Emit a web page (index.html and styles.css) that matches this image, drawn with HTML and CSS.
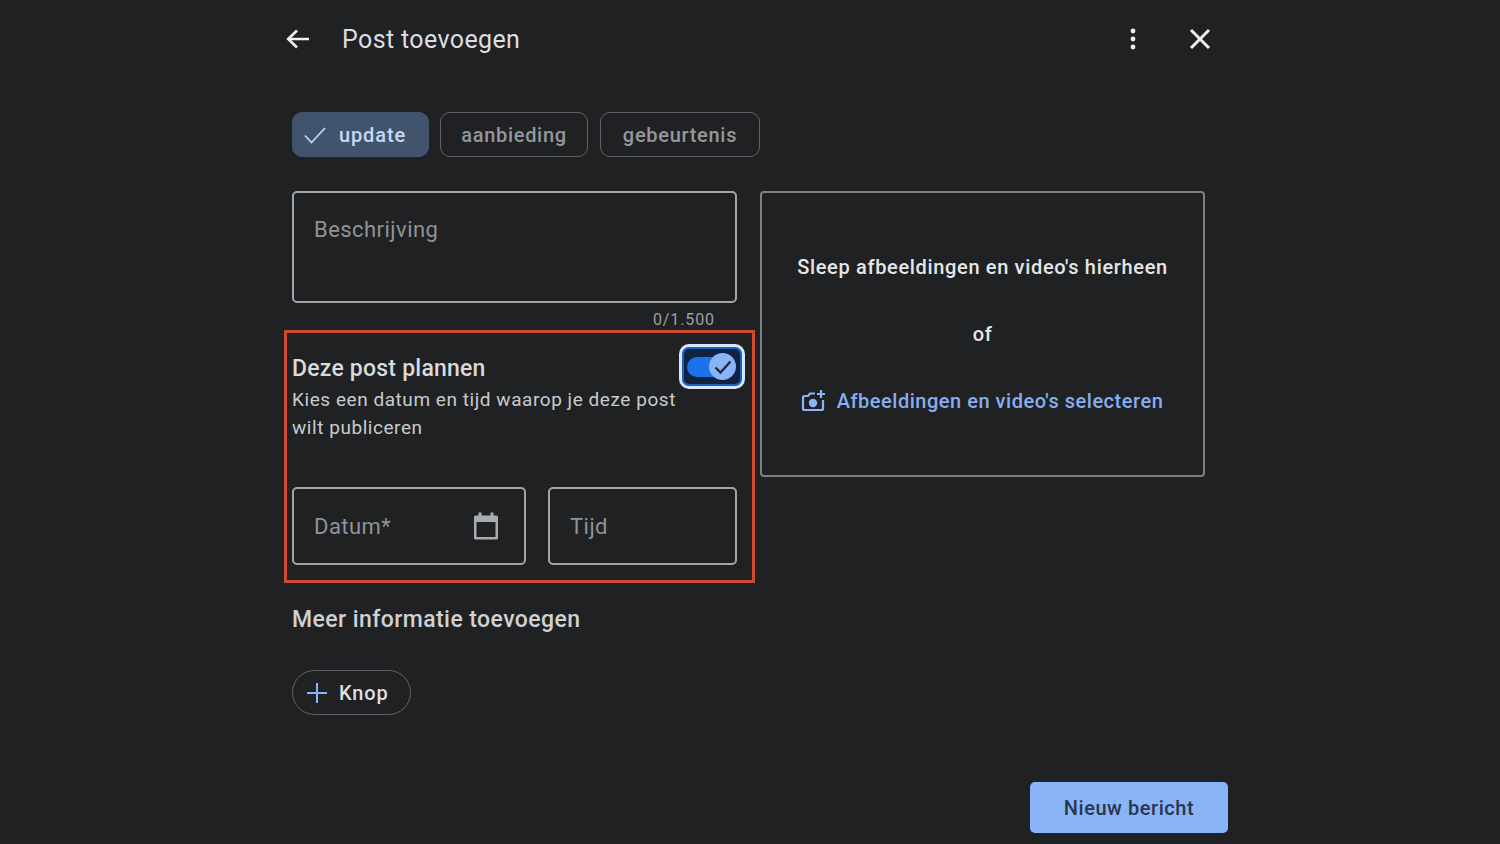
FILE: index.html
```html
<!DOCTYPE html>
<html lang="nl">
<head>
<meta charset="utf-8">
<title>Post toevoegen</title>
<link rel="stylesheet" href="styles.css">
</head>
<body>
<div class="dialog">
  <header class="topbar">
    <svg class="icon-back" width="26" height="24" viewBox="0 0 26 24"><path d="M24 12H3M12 3.500L3.200 12l8.800 8.500" fill="none" stroke="#f0f0f0" stroke-width="2.600"/></svg>
    <h1 class="title">Post toevoegen</h1>
    <div class="top-actions">
      <svg class="icon-more" width="6" height="24" viewBox="0 0 6 24"><circle cx="3" cy="4" r="2.400"/><circle cx="3" cy="12" r="2.400"/><circle cx="3" cy="20" r="2.400"/></svg>
      <svg class="icon-close" width="22" height="22" viewBox="0 0 22 22"><path d="M2 2l18 18M20 2L2 20" stroke="#f0f0f0" stroke-width="3" fill="none"/></svg>
    </div>
  </header>

  <div class="chips">
    <div class="chip chip-on">
      <svg width="24" height="20" viewBox="0 0 24 20"><path d="M2 10.500l6.500 7L22 3" fill="none" stroke="#c4d7f0" stroke-width="1.800"/></svg>
      <span>update</span>
    </div>
    <div class="chip chip-a">aanbieding</div>
    <div class="chip chip-g">gebeurtenis</div>
  </div>

  <div class="columns">
    <div class="left">
      <div class="field description">Beschrijving</div>
      <div class="counter">0/1.500</div>
      <section class="schedule">
        <div class="schedule-head">
          <div class="schedule-text">
            <h2 class="schedule-title">Deze post plannen</h2>
            <p class="schedule-desc">Kies een datum en tijd waarop je deze post wilt publiceren</p>
          </div>
          <div class="toggle-focus">
            <div class="toggle-track"></div>
            <div class="toggle-thumb">
              <svg width="20" height="18" viewBox="0 0 20 18"><path d="M2.500 9.500l5 5L17.500 3.500" fill="none" stroke="#1f2a3d" stroke-width="2.400"/></svg>
            </div>
          </div>
        </div>
        <div class="date-row">
          <div class="field date">
            <span>Datum*</span>
            <svg width="26" height="30" viewBox="0 0 26 30"><path d="M7 1.500v5M19 1.500v5" stroke="#a9acaf" stroke-width="3" fill="none"/><path d="M2.500 4.500h21a1.500 1.500 0 0 1 1.500 1.500v21a1.500 1.500 0 0 1-1.500 1.500h-21A1.500 1.500 0 0 1 1 27V6a1.500 1.500 0 0 1 1.500-1.500zM3.500 11v15h19V11z" fill="#a9acaf" fill-rule="evenodd"/></svg>
          </div>
          <div class="field time">Tijd</div>
        </div>
      </section>
      <h2 class="more-title">Meer informatie toevoegen</h2>
      <div class="knop">
        <svg width="22" height="22" viewBox="0 0 22 22"><path d="M11 1v20M1 11h20" stroke="#8ab4f8" stroke-width="2" fill="none"/></svg>
        <span>Knop</span>
      </div>
    </div>

    <div class="dropzone">
      <p class="drop-line">Sleep afbeeldingen en video's hierheen</p>
      <p class="drop-line">of</p>
      <div class="drop-link">
        <svg width="26" height="24" viewBox="0 0 26 24"><path d="M14 4.500H9L7 7H3.500A1.500 1.500 0 0 0 2 8.500v11A1.500 1.500 0 0 0 3.500 21h17a1.500 1.500 0 0 0 1.500-1.500V11" fill="none" stroke="#8ab4f8" stroke-width="2.200"/><circle cx="12" cy="14" r="4.200" fill="#8ab4f8"/><path d="M20 1v8M16 5h8" stroke="#8ab4f8" stroke-width="2.200" fill="none"/></svg>
        <span>Afbeeldingen en video's selecteren</span>
      </div>
    </div>
  </div>

  <div class="footer">
    <div class="primary">Nieuw bericht</div>
  </div>
</div>
</body>
</html>
```
FILE: styles.css
```css
* { box-sizing: border-box; }
html, body { margin: 0; height: 100%; }
body {
  background: #202123;
  color: #e8eaed;
  font-family: Roboto, "Liberation Sans", sans-serif;
  overflow: hidden;
}
h1, h2, p { margin: 0; font-weight: 400; }

.dialog { width: 944px; margin-left: 284px; padding-left: 8px; }

.topbar { display: flex; align-items: center; height: 78px; margin-left: -8px; }
.icon-back { margin-left: 1px; }
.title { margin-left: 31px; font-size: 25px; letter-spacing: 0.38px; color: #dcdee0; }
.top-actions { margin-left: auto; display: flex; align-items: center; gap: 53px; margin-right: 17px; }
.icon-more { fill: #f0f0f0; }

.chips { display: flex; gap: 11px; margin-top: 34px; height: 45px; }
.chip {
  display: flex; align-items: center; justify-content: center;
  border: 1.500px solid #5f6368; border-radius: 10px;
  font-size: 20px; font-weight: 500; letter-spacing: 0.7px; color: #94989c;
}
.chip-on { width: 137px; background: #41536d; border-color: #41536d; color: #c8daf3; gap: 12px; padding-right: 12px; letter-spacing: 0.9px; }
.chip-a { width: 148px; margin-right: 1px; }
.chip-g { width: 160px; }

.columns { display: grid; grid-template-columns: 445px 445px; column-gap: 23px; margin-top: 34px; align-items: start; }

.field {
  border: 2px solid #a2a5a8; border-radius: 5px;
  font-size: 22px; letter-spacing: 0.45px; color: #8f9396;
}
.description { height: 112px; padding: 24px 20px; }
.counter { margin-top: 7px; padding-right: 22px; text-align: right; font-size: 16px; line-height: 20px; letter-spacing: 0.9px; color: #9aa0a6; }

.schedule { margin: 0 -18px 0 -8px; height: 253px; border: 3px solid #cf4a30; padding: 0 15px 0 5px; }
.schedule-head { display: flex; justify-content: space-between; align-items: flex-start; }
.schedule-text { width: 395px; padding-top: 21px; }
.schedule-title { font-size: 23px; line-height: 30px; letter-spacing: 0.22px; font-weight: 500; color: #d8dadc; }
.schedule-desc { margin-top: 2px; font-size: 19px; line-height: 28px; letter-spacing: 0.55px; color: #c8cbce; }
.toggle-focus {
  display: flex; align-items: center; position: relative;
  width: 67px; height: 45px; margin: 11px -8px 0 0;
  border: 3px solid #d7e6fb; border-radius: 10px; background: #11233f; box-shadow: inset 0 0 0 2px #1a5fc2;
}
.toggle-track { width: 38px; height: 20px; margin-left: 5px; border-radius: 10px; background: #1a73e8; }
.toggle-thumb {
  position: absolute; left: 27px; top: 6px;
  display: flex; align-items: center; justify-content: center;
  width: 27px; height: 27px; border-radius: 50%; background: #8ab4f8;
}
.date-row { display: flex; gap: 22px; margin-top: 45px; }
.date { display: flex; align-items: center; justify-content: space-between; width: 234px; height: 78px; padding: 0 25px 0 20px; }
.time { display: flex; align-items: center; width: 189px; height: 78px; padding-left: 20px; }

.more-title { margin-top: 22px; font-size: 23px; line-height: 30px; font-weight: 500; letter-spacing: 0.42px; color: #cfd1d3; }
.knop {
  display: flex; align-items: center; gap: 11px;
  width: 119px; height: 45px; margin-top: 35px; padding-left: 13px;
  border: 1.500px solid #5f6368; border-radius: 23px;
  font-size: 20px; font-weight: 500; letter-spacing: 0.8px; color: #dcdee0;
}

.dropzone {
  display: flex; flex-direction: column; align-items: center;
  height: 286px; padding-top: 60px;
  border: 2px solid #7d8083; border-radius: 4px;
}
.drop-line { font-size: 20px; line-height: 28px; font-weight: 500; letter-spacing: 0.66px; color: #e4e6e8; margin-bottom: 39px; }
.drop-link { display: flex; align-items: center; gap: 10px; font-size: 20px; line-height: 28px; font-weight: 500; letter-spacing: 0.52px; color: #86aef0; margin-left: -1px; }

.footer { display: flex; justify-content: flex-end; position: fixed; left: 284px; width: 944px; top: 782px; }
.primary {
  display: flex; align-items: center; justify-content: center;
  width: 198px; height: 51px; border-radius: 5px;
  background: #8ab4f8; color: #2a3650;
  font-size: 20px; font-weight: 500; letter-spacing: 0.55px;
}
```
